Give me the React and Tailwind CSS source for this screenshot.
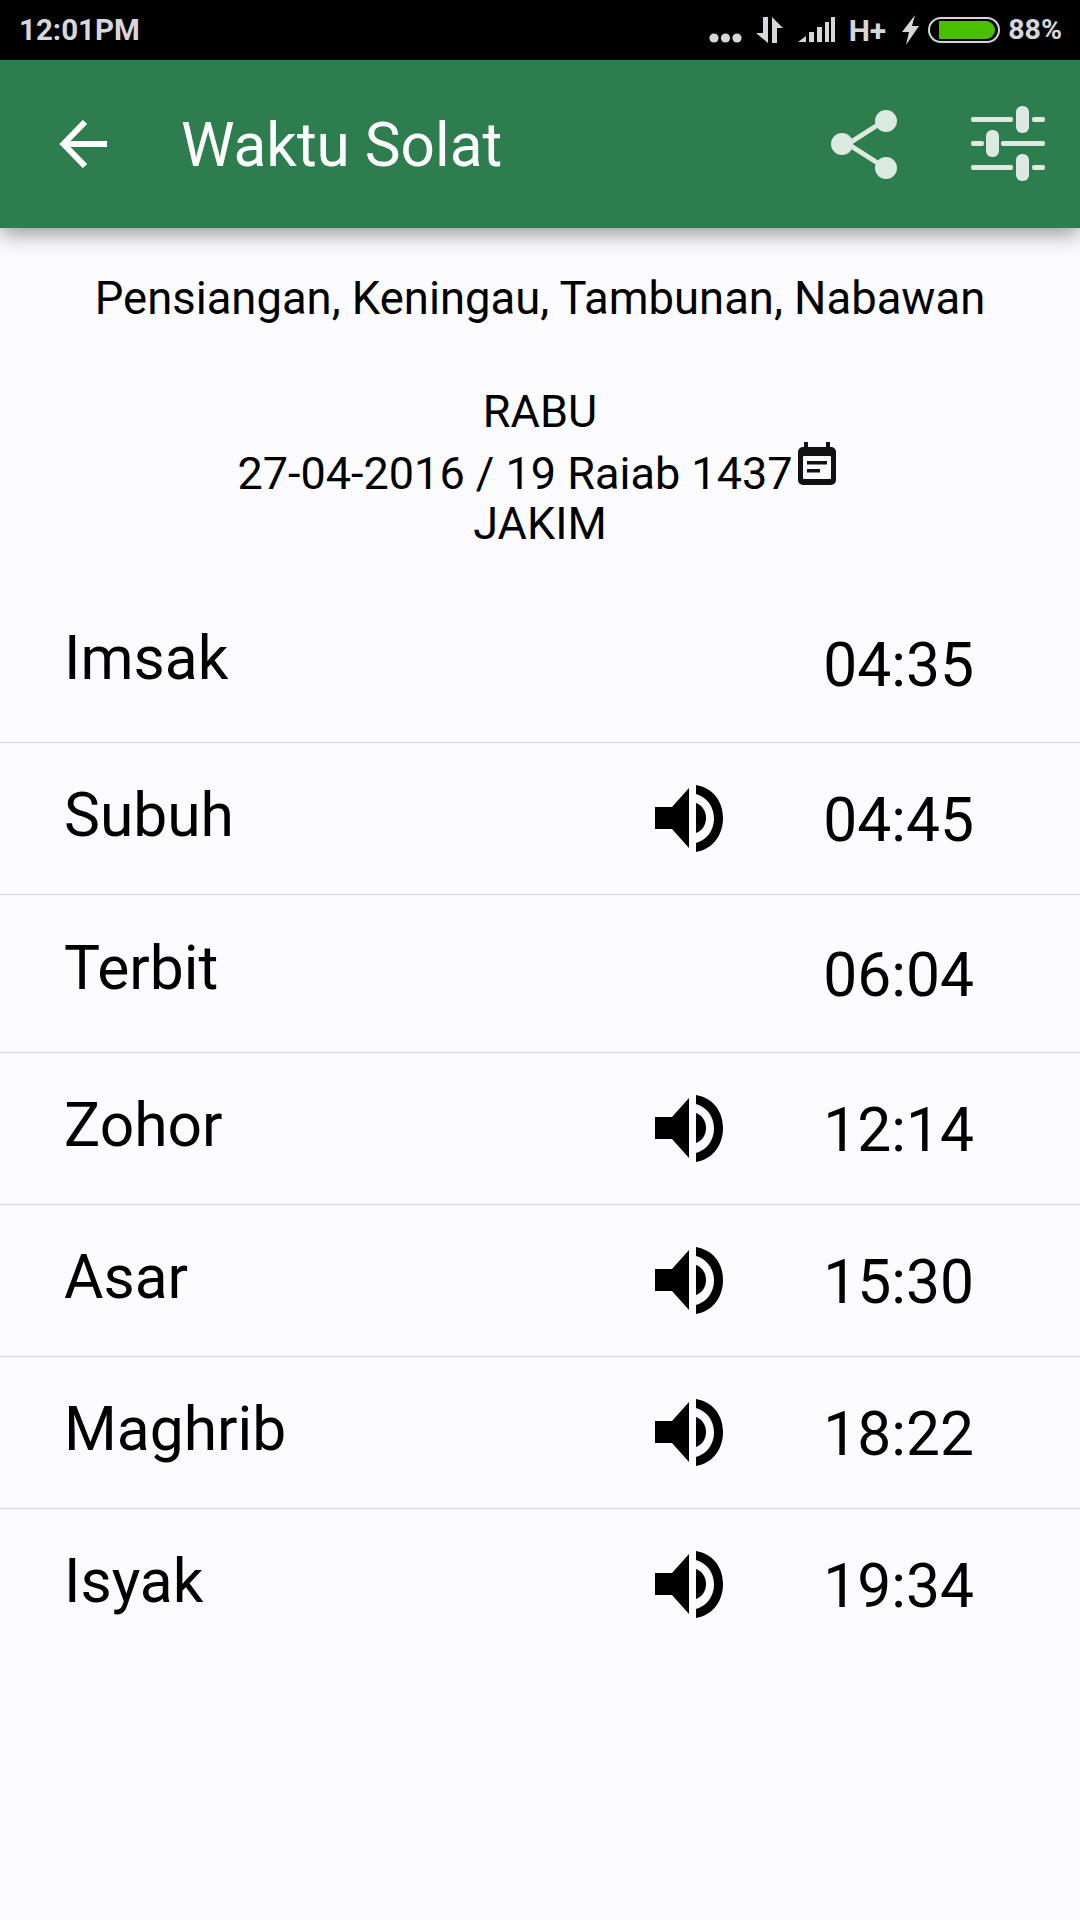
import React from 'react';

const prayers = [
  { name: 'Imsak', time: '04:35', sound: false, h: 'h-[157px]', nameTop: 'pt-[39px]', timeTop: 'pt-[46px]' },
  { name: 'Subuh', time: '04:45', sound: true, h: 'h-[152px]', nameTop: 'pt-[39px]', timeTop: 'pt-[44px]' },
  { name: 'Terbit', time: '06:04', sound: false, h: 'h-[158px]', nameTop: 'pt-[40px]', timeTop: 'pt-[47px]' },
  { name: 'Zohor', time: '12:14', sound: true, h: 'h-[152px]', nameTop: 'pt-[39px]', timeTop: 'pt-[44px]' },
  { name: 'Asar', time: '15:30', sound: true, h: 'h-[152px]', nameTop: 'pt-[39px]', timeTop: 'pt-[44px]' },
  { name: 'Maghrib', time: '18:22', sound: true, h: 'h-[152px]', nameTop: 'pt-[39px]', timeTop: 'pt-[44px]' },
  { name: 'Isyak', time: '19:34', sound: true, h: 'h-[152px]', nameTop: 'pt-[39px]', timeTop: 'pt-[44px]', last: true },
];

function SpeakerIcon() {
  return (
    <svg width="70" height="70" viewBox="0 -3 70 70" fill="#000">
      <path d="M0 22H17L34 3V63L17 44H0Z" />
      <path d="M41 0C58 3 68 16 68 33C68 50 58 64 41 67V58C52 55 59 45 59 33.5C59 22 52 12 41 9Z" />
      <path d="M41 18C47 20 51 26 51 33C51 40 47 46 41 48Z" />
    </svg>
  );
}

function StatusBar() {
  return (
    <div className="h-[60px] bg-black flex items-center text-[#d8d6da] font-bold relative">
      <span className="ml-[19px] mt-[1px] text-[29.5px] leading-none">12:01PM</span>
      <div className="ml-auto flex items-center h-full mr-[18px]">
        <svg width="74" height="30" viewBox="0 0 74 30" fill="#d8d6da">
          <circle cx="5" cy="23" r="4.6" />
          <circle cx="16.5" cy="23" r="4.6" />
          <circle cx="28" cy="23" r="4.6" />
          <path d="M54 2H59V28L47 18H54Z" />
          <path d="M63 2L74 13H68V28H63Z" />
        </svg>
        <svg width="37" height="28" viewBox="0 0 37 28" fill="#d8d6da" className="ml-[15px]">
          <path d="M0 26L8 20V26Z" />
          <rect x="11" y="16" width="5" height="10" />
          <rect x="19" y="11" width="5" height="15" />
          <rect x="27" y="6" width="4" height="20" />
          <rect x="33" y="1" width="4" height="25" />
        </svg>
        <span className="ml-[14px] mt-[1px] text-[30px] leading-none">H+</span>
        <svg width="17" height="30" viewBox="0 0 17 30" fill="#d8d6da" className="ml-[16px]">
          <path d="M13 0L0 17H7L4 30L17 11H10Z" />
        </svg>
        <div className="ml-[9px] w-[72px] h-[26px] rounded-full border-2 border-[#d8d6da] flex items-center pl-[9px] pr-[3px]">
          <div className="w-full h-[18px] bg-[#48c000] rounded-r-full"></div>
        </div>
        <span className="ml-[8px] mt-[1px] text-[28.5px] leading-none">88%</span>
      </div>
    </div>
  );
}

function Toolbar() {
  return (
    <div className="h-[168px] bg-[#2d7d4f] flex items-center relative shadow-[0_6px_20px_rgba(0,0,0,0.4)]">
      <svg width="48" height="48" viewBox="0 0 48 48" fill="none" stroke="#fff" strokeWidth="6" className="ml-[59px]">
        <path d="M48 24H4M26 2L4.5 24L26 46" />
      </svg>
      <span className="ml-[74px] mt-[5px] text-white text-[60.3px] leading-none font-normal">Waktu Solat</span>
      <svg width="72" height="72" viewBox="0 0 72 72" className="ml-auto" fill="#dce9e1" stroke="#dce9e1">
        <path d="M54 13L18 36L54 59" fill="none" strokeWidth="5" />
        <circle cx="56" cy="13" r="11" stroke="none" />
        <circle cx="12" cy="36" r="11" stroke="none" />
        <circle cx="56" cy="60" r="11" stroke="none" />
      </svg>
      <svg width="76" height="76" viewBox="0 0 76 76" className="ml-[68px] mr-[34px]" fill="#dce9e1">
        <rect x="1" y="11" width="42" height="5" rx="2" />
        <rect x="62" y="11" width="13" height="5" rx="2" />
        <rect x="46" y="0" width="13" height="27" rx="6" />
        <rect x="1" y="35" width="13" height="5" rx="2" />
        <rect x="31" y="35" width="44" height="5" rx="2" />
        <rect x="16" y="24" width="13" height="27" rx="6" />
        <rect x="1" y="59" width="42" height="5" rx="2" />
        <rect x="62" y="59" width="13" height="5" rx="2" />
        <rect x="46" y="48" width="13" height="27" rx="6" />
      </svg>
    </div>
  );
}

function CalendarIcon() {
  return (
    <svg width="40" height="44" viewBox="0 0 40 44" className="-mt-[7px] ml-[4px] mr-[6px]">
      <rect x="7" y="0" width="4" height="8" fill="#111" />
      <rect x="29" y="0" width="4" height="8" fill="#111" />
      <rect x="1" y="5" width="38" height="38" rx="5" fill="#111" />
      <rect x="6" y="14" width="28" height="23" rx="1" fill="#fbfbfd" />
      <rect x="10" y="19" width="20" height="3.5" fill="#111" />
      <rect x="10" y="27" width="13" height="3.5" fill="#111" />
    </svg>
  );
}

export default function App() {
  return (
    <div className="w-[1080px] h-[1920px] bg-[#fbfbfd] overflow-hidden text-black font-['Roboto',sans-serif]">
      <StatusBar />
      <Toolbar />
      <div className="pt-[46px] text-center text-[45.4px] leading-[50px]">Pensiangan, Keningau, Tambunan, Nabawan</div>
      <div className="mt-[63px] flex flex-col items-center text-[45px] leading-[50px]">
        <span>RABU</span>
        <span className="mt-[12px] flex items-start">
          27-04-2016 / 19 Raiab 1437
          <CalendarIcon />
        </span>
        <span>JAKIM</span>
      </div>
      <div className="mt-[37px]">
        {prayers.map((p) => (
          <div key={p.name} className={`flex items-start pl-[64px] pr-[106px] ${p.h} ${p.last ? '' : 'border-b border-[#d5d5d7]'}`}>
            <span className={`text-[60.5px] leading-[68px] ${p.nameTop}`}>{p.name}</span>
            {p.sound && (
              <div className="ml-auto mr-[98px] self-start pt-[39px]">
                <SpeakerIcon />
              </div>
            )}
            <span className={`text-[60.5px] leading-[68px] ${p.sound ? '' : 'ml-auto'} ${p.timeTop}`}>{p.time}</span>
          </div>
        ))}
      </div>
    </div>
  );
}
